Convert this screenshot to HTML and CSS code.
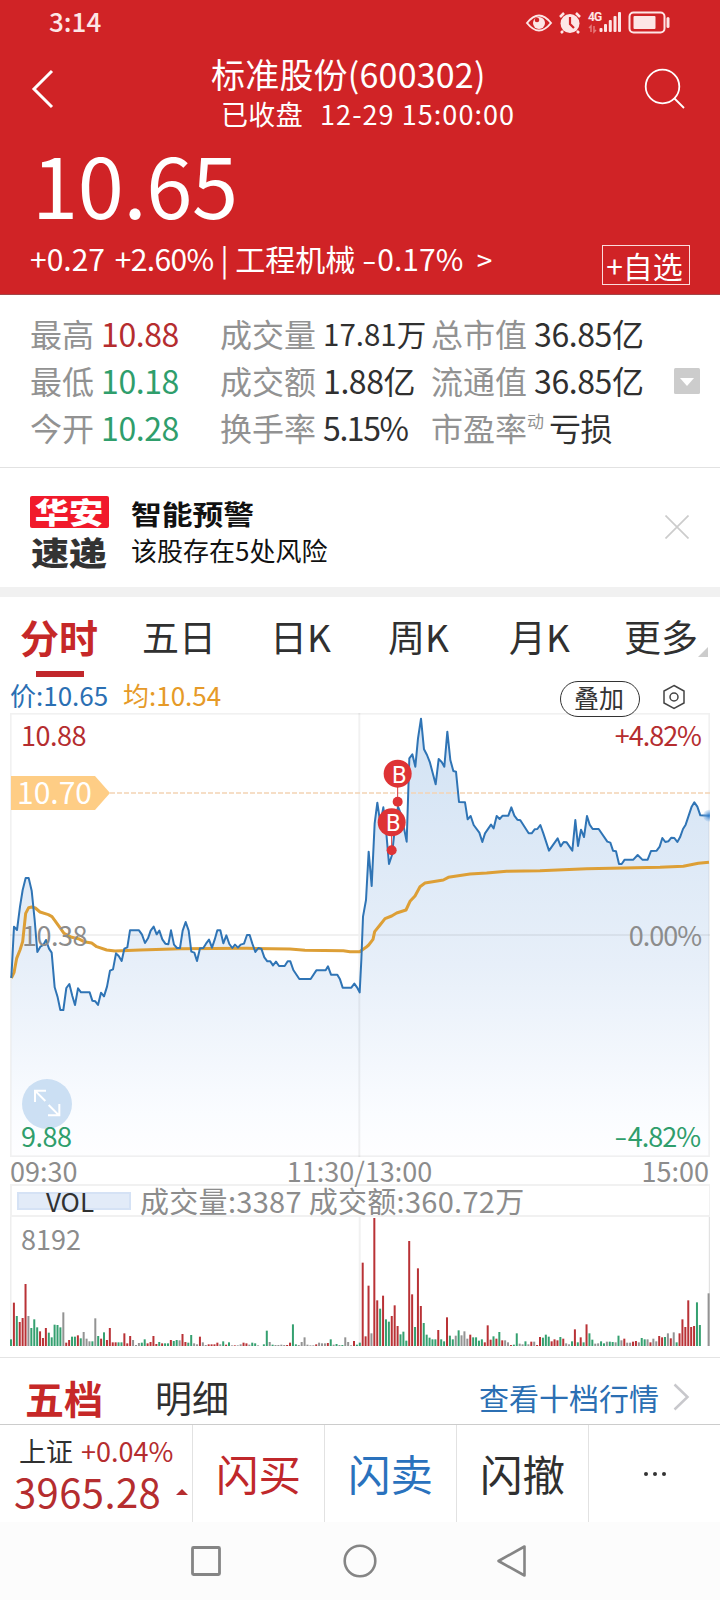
FILE: index.html
```html
<!DOCTYPE html>
<html lang="zh-CN">
<head>
    <meta charset="UTF-8">
    <meta name="viewport" content="width=device-width, initial-scale=1.0">
    <title>标准股份(600302)</title>
    <link rel="stylesheet" href="styles.css">
</head>
<body>
    <header class="header">
        <div class="status-bar">
            <span class="time">3:14</span>
            <svg class="status-icons" width="150" height="30" viewBox="0 0 150 30">
                <g fill="none" stroke="#fde6e6" stroke-width="2">
                    <path d="M3 16Q15 1 27 16Q15 31 3 16Z"/>
                    <path d="M112.500 6h27a4 4 0 0 1 4 4v12a4 4 0 0 1-4 4h-27a4 4 0 0 1-4-4V10a4 4 0 0 1 4-4Z" transform="translate(-3 -.5)"/>
                </g>
                <g fill="#fde6e6">
                    <circle cx="15" cy="16" r="6"/>
                    <circle cx="46" cy="16.500" r="9.500"/>
                    <rect x="109.500" y="9" width="22" height="13" rx="1"/>
                    <rect x="142.500" y="10" width="3" height="11" rx="1.500"/>
                    <rect x="75.500" y="21" width="3" height="4" rx="1"/>
                    <rect x="80" y="17" width="3" height="8" rx="1"/>
                    <rect x="84.800" y="13" width="3" height="12" rx="1"/>
                    <rect x="89.500" y="9" width="3" height="16" rx="1"/>
                    <rect x="94" y="5" width="3" height="20" rx="1"/>
                </g>
                <path d="M36 10l4-4M56 10l-4-4M39 24l-2 2M53 24l2 2" stroke="#fde6e6" stroke-width="2.500" fill="none"/>
                <path d="M46 10v7l4 4" stroke="#d02326" stroke-width="2.200" fill="none"/>
                <circle cx="13" cy="13" r="2.300" fill="#d02326"/>
                <path d="M67 25v-6l-2 2M70 19v6l2-2" stroke="#e57b7c" stroke-width="1.500" fill="none"/>
                <text x="64" y="14" class="net">4G</text>
            </svg>
        </div>
        <div class="title-bar">
            <svg class="back" width="24" height="40" viewBox="0 0 24 40"><path d="M21 2L3 20L21 38" fill="none" stroke="#fff" stroke-width="3"/></svg>
            <div class="titles">
                <h1>标准股份(600302)</h1>
                <p>已收盘<span class="date">12-29 15:00:00</span></p>
            </div>
            <svg class="search" width="42" height="42" viewBox="0 0 42 42"><g fill="none" stroke="#fff" stroke-width="1.800"><circle cx="18.500" cy="18.500" r="16.800"/><path d="M30 30L40 40"/></g></svg>
        </div>
        <div class="price">10.65</div>
        <div class="change-row">
            <span class="change">+0.27 <span class="pct">+2.60%</span> | 工程机械 <i class="dash">-</i>0.17%&nbsp; <i class="gt">&gt;</i></span>
            <button class="add-btn">+自选</button>
        </div>
    </header>

    <section class="stats">
        <dl>
            <div><dt>最高</dt><dd class="up">10.88</dd></div>
            <div><dt>最低</dt><dd class="down">10.18</dd></div>
            <div><dt>今开</dt><dd class="down">10.28</dd></div>
        </dl>
        <dl>
            <div><dt>成交量</dt><dd class="fit">17.81万</dd></div>
            <div><dt>成交额</dt><dd>1.88亿</dd></div>
            <div><dt>换手率</dt><dd class="pct">5.15%</dd></div>
        </dl>
        <dl>
            <div><dt>总市值</dt><dd>36.85亿</dd></div>
            <div><dt>流通值</dt><dd>36.85亿</dd></div>
            <div><dt>市盈率<sup>动</sup></dt><dd>亏损</dd></div>
        </dl>
        <svg class="expand" width="26" height="26" viewBox="0 0 26 26"><rect width="26" height="26" rx="1.500" fill="#ccc"/><path d="M6 10h14l-7 8z" fill="#fff"/></svg>
    </section>

    <section class="alert">
        <div class="logo">
            <div class="logo-top"><span>华安</span></div>
            <div class="logo-bottom"><span>速递</span></div>
        </div>
        <div class="alert-text">
            <h2>智能预警</h2>
            <p>该股存在5处风险</p>
        </div>
        <svg class="close" width="24" height="24" viewBox="0 0 24 24"><path d="M.5.500l23 23M23.500.500l-23 23" stroke="#ccc" stroke-width="1.700"/></svg>
    </section>

    <nav class="tabs">
        <span class="tab active">分时</span>
        <span class="tab">五日</span>
        <span class="tab">日K</span>
        <span class="tab">周K</span>
        <span class="tab">月K</span>
        <span class="tab more">更多</span>
    </nav>

    <section class="legend">
        <span class="blue">价:10.65</span>
        <span class="orange">均:10.54</span>
        <button class="overlay-btn">叠加</button>
        <svg width="24" height="26" viewBox="0 0 24 26"><g fill="none" stroke="#444" stroke-width="1.500"><path d="M12 1.500L22 7v12l-10 5.500L2 19V7z"/><circle cx="12" cy="13" r="4"/></g></svg>
    </section>

    <section class="chart">
        <svg width="700" height="444" viewBox="30 -411 2100 1332">
            <defs>
                <linearGradient id="area" x1="0" y1="-360" x2="0" y2="920" gradientUnits="userSpaceOnUse">
                    <stop offset="0" stop-color="#d3e3f4"/>
                    <stop offset=".55" stop-color="#e7eff9"/>
                    <stop offset=".9" stop-color="#fafcff"/>
                    <stop offset="1" stop-color="#fefeff"/>
                </linearGradient>
                <radialGradient id="dot">
                    <stop offset="0" stop-color="#2f7cc9"/>
                    <stop offset="1" stop-color="#7fb2e6" stop-opacity=".2"/>
                </radialGradient>
            </defs>
            <path id="priceArea" fill="url(#area)"/>
            <g stroke="#000" stroke-opacity=".055" fill="none">
                <rect x="32" y="-409" width="2096" height="1328" stroke-width="6"/>
                <path d="M1078 -411V921M30 255H2130" stroke-width="6"/>
            </g>
            <path d="M330 -171H2130" stroke="#f3d3b4" stroke-width="5" stroke-dasharray="15 6"/>
            <polyline id="avgLine" fill="none" stroke="#dd9f36" stroke-width="9" stroke-linejoin="round"/>
            <polyline id="priceLine" fill="none" stroke="#2f74b5" stroke-width="6" stroke-linejoin="round"/>
            <circle cx="2127" cy="-103" r="18" fill="url(#dot)"/>
            <path d="M33 -222H285L330 -171L285 -120H33z" fill="#fecd85"/>
            <!-- buy markers -->
            <g stroke="#d93a3c" stroke-width="3"><path d="M1193 -190V-145M1175 -45V0"/></g>
            <g fill="#de3335">
                <circle cx="1193" cy="-229" r="42"/><circle cx="1193" cy="-145" r="15"/>
                <circle cx="1175" cy="-83" r="42"/><circle cx="1175" cy="1" r="15"/>
            </g>
            <text class="mark" x="1198" y="-202">B</text>
            <text class="mark" x="1180" y="-56">B</text>
            <circle cx="141" cy="762" r="75" fill="#bcd5ef" fill-opacity=".75"/>
            <path d="M136 753L105 722M138 722H105V756M146 765L177 796M144 796H178V762" fill="none" stroke="#fff" stroke-width="6"/>
        </svg>
        <span class="lbl top-left up">10.88</span>
        <span class="lbl top-right up">+4.82%</span>
        <span class="lbl tag">10.70</span>
        <span class="lbl mid-left">10.38</span>
        <span class="lbl mid-right">0.00%</span>
        <span class="lbl bottom-left down">9.88</span>
        <span class="lbl bottom-right down"><i class="dash">-</i>4.82%</span>
    </section>
    <div class="axis"><span>09:30</span><span>11:30/13:00</span><span>15:00</span></div>

    <section class="volume">
        <div class="vol-head"><span class="vol-btn">VOL</span><span class="vol-text">成交量:3387 成交额:360.72万</span></div>
        <div class="vol-body">
            <span class="vol-max">8192</span>
            <svg width="700" height="129" viewBox="30 201 2100 387">
                <path d="M1079 201V588" stroke="#f1f1f1" stroke-width="6"/>
                <path d="M32 201V588" stroke="#eee" stroke-width="5"/>
                <path d="M2128 201V588" stroke="#ddd" stroke-width="3"/>
                <g id="bars"></g>
            </svg>
        </div>
    </section>

    <section class="depth">
        <span class="depth-tab active">五档</span>
        <span class="depth-tab">明细</span>
        <a class="more-link">查看十档行情</a>
        <svg width="17" height="28" viewBox="0 0 17 28"><path d="M1.500 1.500L14.500 14L1.500 26.500" fill="none" stroke="#c8c8cc" stroke-width="2.500"/></svg>
    </section>

    <footer class="actions">
        <div class="index">
            <div class="index-name">上证 <span class="up">+0.04%</span></div>
            <div class="index-value up">3965.28<i class="tri"></i></div>
        </div>
        <div class="action buy">闪买</div>
        <div class="action sell">闪卖</div>
        <div class="action">闪撤</div>
        <div class="action dots"><i></i><i></i><i></i></div>
    </footer>

    <div class="sys-nav">
        <svg width="34" height="34" viewBox="0 0 34 34"><rect x="3.500" y="3.500" width="27" height="27" rx="1" fill="none" stroke="#858585" stroke-width="2.800"/></svg>
        <svg width="34" height="34" viewBox="0 0 34 34"><circle cx="17" cy="17" r="15.300" fill="none" stroke="#858585" stroke-width="2.600"/></svg>
        <svg width="34" height="34" viewBox="0 0 34 34"><path d="M27.500 2.500v29L1.500 17z" fill="none" stroke="#858585" stroke-width="2.600" stroke-linejoin="round"/></svg>
    </div>

    <script src="chart.js"></script>
</body>
</html>
```

FILE: styles.css
```css
* {
    box-sizing: border-box;
}
body {
    margin: 0;
    width: 720px;
    height: 1600px;
    overflow: hidden;
    background: #fff;
    color: #303030;
    font-family: "Noto Sans CJK SC", sans-serif;
}
h1, h2, p, dl, dd {
    margin: 0;
    font-weight: normal;
}
i {
    font-style: normal;
}
svg {
    display: block;
    flex: none;
}
.up {
    color: #b52d2f;
}
.down {
    color: #2f9e6c;
}
.dash {
    display: inline-block;
    transform: scaleX(1.4);
    margin: 0 3px 0 2px;
}

/* header */
.header {
    height: 295px;
    background: #d02326;
    color: #fff;
    border-bottom: 1px solid #a34547;
}
.status-bar {
    height: 42px;
    display: flex;
    align-items: center;
    justify-content: space-between;
    padding: 0 46px 0 49px;
}
.time {
    font-size: 26px;
    line-height: 42px;
    font-weight: 500;
    color: #fde6e6;
}
.status-icons {
    margin-top: 1px;
}
.net {
    font: bold 12px Roboto, sans-serif;
    fill: #fde6e6;
    letter-spacing: -1px;
}
.title-bar {
    display: flex;
    height: 96px;
    padding: 12px 34px 0 31px;
}
.back {
    margin-top: 15px;
}
.titles {
    flex: 1;
    padding-left: 156px;
}
.titles h1 {
    font-size: 34px;
    line-height: 40px;
    letter-spacing: .2px;
}
.titles p {
    font-size: 27px;
    line-height: 40px;
    padding-left: 10px;
    letter-spacing: .35px;
    white-space: nowrap;
}
.date {
    margin-left: 17px;
    letter-spacing: 1.050px;
}
.search {
    margin-top: 14px;
}
.price {
    font-size: 83px;
    line-height: 90px;
    padding-left: 32px;
    letter-spacing: -.3px;
}
.change-row {
    display: flex;
    justify-content: space-between;
    padding: 10px 30px 0;
    font-size: 30px;
    line-height: 41px;
}
.change {
    white-space: nowrap;
}
.change .pct {
    margin-left: 3px;
    letter-spacing: -.6px;
}
.gt {
    display: inline-block;
    font-size: 28px;
}
.add-btn {
    width: 88px;
    height: 40px;
    margin: 7px 0 0;
    padding: 0 3px 0 0;
    border: 1px solid #fbdcdc;
    background: none;
    color: #fff;
    font: 30px/38px "Noto Sans CJK SC", sans-serif;
    white-space: nowrap;
}
.add-btn::first-line {
    line-height: 38px;
}

/* stats */
.stats {
    display: grid;
    grid-template-columns: 190px 211px 243px 26px;
    height: 173px;
    padding: 15px 16px 0 30px;
    border-bottom: 1px solid #e2e2e2;
    font-size: 32px;
    line-height: 47px;
}
.stats dl div {
    display: flex;
    height: 47px;
    white-space: nowrap;
}
.stats dt {
    margin-right: 7px;
    color: #929292;
}
.stats dd {
    letter-spacing: -.4px;
}
.stats .fit {
    font-size: 29.500px;
    letter-spacing: 0;
}
.stats .pct {
    letter-spacing: -1.400px;
}
.stats sup {
    display: inline-block;
    width: 16px;
    margin-right: -1px;
    font-size: 17px;
    line-height: 20px;
    vertical-align: 13px;
}
.expand {
    margin-top: 58px;
}

/* alert */
.alert {
    display: flex;
    height: 129px;
    padding: 28px 30px 0;
    border-bottom: 10px solid #f1f1f1;
    color: #111;
}
.logo {
    width: 79px;
    font-weight: 900;
    text-align: center;
}
.logo span {
    display: inline-block;
    transform: scaleX(1.18);
}
.logo-top {
    height: 32px;
    font-size: 29px;
    line-height: 30px;
    border-radius: 2px;
    background: #f11a2b;
    color: #fff;
}
.logo-bottom {
    height: 32px;
    margin-top: 9px;
    font-size: 32px;
    line-height: 29px;
    color: #333;
}
.alert-text {
    flex: 1;
    padding-left: 22px;
}
.alert-text h2 {
    font-size: 27px;
    line-height: 36px;
    font-weight: bold;
    transform: scaleX(1.14);
    transform-origin: left;
}
.alert-text p {
    font-size: 26px;
    line-height: 35px;
}
.close {
    margin: 19px 1px 0 0;
}

/* tabs */
.tabs {
    display: grid;
    grid-template-columns: 122px 128px 118px 121px 115px 74px;
    height: 80px;
    padding-left: 20px;
    font-size: 37px;
    line-height: 79px;
}
.tab {
    position: relative;
}
.tab.active {
    font-size: 39px;
    font-weight: bold;
    color: #c62828;
}
.tab.active::after {
    content: "";
    position: absolute;
    left: 16px;
    top: 74px;
    width: 48px;
    height: 6px;
    background: #c1272b;
}
.tab.more::after {
    content: "";
    position: absolute;
    right: -10px;
    top: 50px;
    border-left: 10px solid transparent;
    border-bottom: 10px solid #ccc;
}

/* price chart */
.legend {
    display: flex;
    height: 36px;
    padding-left: 10px;
    font-size: 26px;
    line-height: 35px;
}
.legend .blue {
    width: 113px;
    color: #2b6fb3;
}
.legend .orange {
    width: 437px;
    color: #e69a28;
}
.overlay-btn {
    position: relative;
    z-index: 1;
    width: 80px;
    height: 36px;
    margin: 4px 22px 0 0;
    padding: 0 2px 3px 0;
    border: 1px solid #333;
    border-radius: 18px;
    background: #fff;
    color: #333;
    font: 25px/31px "Noto Sans CJK SC", sans-serif;
}
.legend svg {
    margin-top: 7px;
}
.chart {
    position: relative;
    height: 444px;
    padding-left: 10px;
}
.mark {
    font: 70px Roboto, sans-serif;
    fill: #fff;
    text-anchor: middle;
}
.lbl {
    position: absolute;
    font-size: 27px;
    line-height: 36px;
    letter-spacing: -.5px;
}
.top-left {
    left: 21px;
    top: 4px;
}
.top-right {
    right: 19px;
    top: 4px;
    letter-spacing: -1px;
}
.tag {
    left: 17px;
    top: 60px;
    font-size: 30px;
    letter-spacing: 0;
    color: #fff;
}
.mid-left {
    left: 22px;
    top: 204px;
    color: #8c8c8c;
}
.mid-right {
    right: 19px;
    top: 204px;
    color: #8c8c8c;
    letter-spacing: -1px;
}
.bottom-left {
    left: 21px;
    top: 405px;
}
.bottom-right {
    right: 20px;
    top: 405px;
    letter-spacing: -1px;
}
.axis {
    display: flex;
    justify-content: space-between;
    height: 27px;
    padding: 0 11px 0 10px;
    color: #8c8c8c;
    font-size: 27px;
    line-height: 28px;
}

/* volume */
.volume {
    height: 174px;
    border-bottom: 1px solid #e4e4e4;
}
.vol-head {
    display: flex;
    align-items: center;
    width: 700px;
    height: 33px;
    margin-left: 10px;
    padding-left: 5px;
    border: 2px solid #f1f1f1;
    border-right-width: 1px;
    color: #8c8c8c;
    font-size: 29px;
    line-height: 27px;
}
.vol-text {
    letter-spacing: .3px;
    margin-top: -1px;
}
.vol-btn {
    width: 114px;
    height: 18px;
    margin-right: 9px;
    padding-right: 8px;
    border: 2px solid #d5e2f5;
    background: #e2ebf8;
    color: #303030;
    font-size: 26px;
    line-height: 13px;
    text-align: center;
}
.vol-body {
    position: relative;
    padding-left: 10px;
}
.vol-max {
    position: absolute;
    left: 21px;
    top: 4px;
    color: #8c8c8c;
    font-size: 27px;
    line-height: 36px;
}

/* depth */
.depth {
    display: flex;
    align-items: center;
    height: 67px;
    padding: 12px 30px 0 25px;
    border-bottom: 1px solid #ccc;
}
.depth-tab {
    width: 130px;
    font-size: 37px;
    line-height: 54px;
}
.depth-tab.active {
    font-size: 39px;
    font-weight: bold;
    color: #c62828;
}
.more-link {
    flex: 1;
    margin-right: 14px;
    text-align: right;
    font-size: 30px;
    line-height: 54px;
    color: #2b6fb3;
}

/* bottom bar */
.actions {
    display: grid;
    grid-template-columns: 192px 132px 132px 132px 132px;
    height: 97px;
}
.index {
    padding: 9px 0 0 14px;
}
.index-name {
    padding-left: 5px;
    font-size: 27px;
    line-height: 34px;
    white-space: nowrap;
}
.index-name .up {
    margin-left: 2px;
}
.index-value {
    display: flex;
    align-items: flex-end;
    font-size: 40px;
    line-height: 46px;
    letter-spacing: .4px;
}
.tri {
    margin: 0 0 19px 15px;
    border: 6px solid transparent;
    border-top: 0;
    border-bottom-color: #b52d2f;
}
.action {
    display: flex;
    justify-content: center;
    border-left: 1px solid #e2e2e2;
    font-size: 42.500px;
    line-height: 95px;
}
.buy {
    color: #c0282b;
}
.sell {
    color: #2a72bd;
}
.dots {
    align-items: center;
    gap: 5px;
}
.dots i {
    width: 4px;
    height: 4px;
    border-radius: 50%;
    background: #333;
}
.sys-nav {
    display: flex;
    justify-content: center;
    gap: 120px;
    height: 78px;
    padding-top: 22px;
    background: #fcfcfc;
}
```

FILE: chart.js
```js
// x,y pairs, one set per trading session
const morning = "34,384 42,230 51,240 60,170 68,120 77,84 86,84 95,122 104,210 112,306 121,290 130,285 138,270 147,296 155,308 164,412 173,442 181,480 190,480 199,414 208,402 217,438 225,465 234,415 243,427 269,427 277,452 286,454 294,465 303,428 312,439 321,410 330,362 339,358 348,310 356,318 365,333 373,296 382,292 390,241 417,241 426,254 435,279 444,265 452,242 461,230 470,253 478,242 487,268 496,281 505,283 513,241 522,284 531,294 540,294 548,242 557,216 566,242 574,305 583,308 591,333 600,295 610,294 618,281 627,269 636,293 644,269 652,241 661,241 670,280 679,256 688,282 697,294 705,284 714,293 722,284 732,281 741,255 749,255 757,281 766,306 775,294 784,296 793,322 802,334 811,334 819,346 828,335 837,348 854,348 863,334 871,334 880,360 898,387 932,387 949,361 977,361 984,349 993,374 1012,374 1020,388 1028,413 1054,413 1063,401 1071,412 1079,427";
const afternoon = "64,780 69,650 78,600 86,455 95,558 104,370 112,308 121,370 130,322 139,400 147,492 156,465 165,380 174,320 182,340 191,380 200,425 208,175 217,163 226,200 234,115 243,56 252,148 261,165 270,188 287,253 296,177 305,186 313,200 322,95 331,180 340,213 348,215 357,306 375,307 383,358 392,348 401,375 418,398 427,426 435,400 453,374 461,385 470,348 479,357 488,347 505,347 514,322 523,347 532,359 541,361 566,400 575,400 584,388 592,387 601,375 610,400 627,452 653,415 662,439 671,426 680,427 697,452 706,360 714,438 723,389 732,411 741,348 749,374 758,387 776,387 802,425 811,428 819,452 828,454 837,492 845,492 854,479 880,479 893,465 907,479 923,479 933,453 950,452 959,440 967,414 976,426 985,424 994,413 1003,414 1012,426 1020,412 1029,387 1037,374 1055,320 1063,307 1072,320 1081,346 1107,347";
const avgMorning = "34,384 42,368 50,325 60,300 68,275 77,190 86,173 95,171 106,174 120,186 145,194 156,200 175,226 192,250 215,262 235,266 252,275 275,279 290,290 320,300 345,303 420,300 540,296 740,295 870,297 915,301 1030,302 1050,305 1079,305";
const avgAfternoon = "78,742 86,735 99,718 104,695 120,675 135,656 155,648 170,639 198,630 210,604 225,588 240,560 255,549 310,540 325,532 390,522 440,519 500,514 600,512 740,506 850,504 960,502 1030,499 1075,490 1107,487";

function shift(points, dx, dy) {
    return points.split(" ").map(p => {
        const [x, y] = p.split(",").map(Number);
        return (x + dx) + "," + (y + dy);
    }).join(" ");
}

const price = morning + " " + shift(afternoon, 1020, -450);
const avg = avgMorning + " " + shift(avgAfternoon, 1020, -450);
document.getElementById("priceLine").setAttribute("points", price);
document.getElementById("avgLine").setAttribute("points", avg);
document.getElementById("priceArea").setAttribute("d", "M" + price + " 2127,921 34,921Z");

// one bar per minute: r = up, g = down, n = flat
const volumes = "g20 r130 g90 r72 r84 r186 n90 g54 g80 g56 r44 r24 r54 g40 g26 g64 g63 g56 n101 r10 r18 g28 g28 r32 g23 n42 n22 n14 g14 n83 g30 r22 g41 r18 r54 r11 r11 g11 g11 r38 r8 r30 n18 n3 n9 g10 g20 r8 r12 r30 r6 g12 r8 g8 g8 r18 g15 g18 n17 r36 r12 g10 g33 n8 n5 r28 n11 n3 r5 r5 r5 r10 n5 g14 r4 g11 n2 r2 n2 n5 r10 r8 n4 g10 g8 n2 n0 g5 g46 n12 g4 n3 n3 n4 n3 r3 r10 g65 g5 n3 n12 n26 n4 n2 n2 r5 n10 n8 n8 r9 g20 n4 g6 n3 g3 n26 n12 n2 r15 g4 g10 "
    + "r250 r29 r181 n38 r384 r137 g112 r151 g80 g73 r90 r122 r60 g35 g43 g16 r315 r155 g57 r233 r120 g69 g34 g25 g20 g20 r48 g20 g14 r86 g31 g20 n31 g47 n32 n44 n22 r34 g26 g26 g16 g20 r11 r62 r19 g29 r22 g42 r17 n17 n11 r3 g4 g38 n7 n5 g14 n5 r13 n13 r3 r27 g25 g34 g28 r14 r20 r17 g27 r22 n8 n5 g14 r50 g11 r26 g11 r65 g38 g19 n7 n8 g14 g8 n13 g13 g12 n11 g31 n17 r22 n10 n10 r13 r15 n11 g24 g20 n20 r11 n22 n14 r30 r26 g27 n38 r23 n41 g11 r38 r80 r57 r137 r57 r60 g131 g63 n0 n0 n158";
const colors = { r: "#b93236", g: "#35a070", n: "#939393" };

document.getElementById("bars").innerHTML = volumes.split(" ").map((v, i) => {
    const h = Number(v.slice(1));
    const x = (30 + i * 8.72).toFixed(1);
    return `<rect x="${x}" y="${588 - h}" width="6" height="${h}" fill="${colors[v[0]]}"/>`;
}).join("");
```
